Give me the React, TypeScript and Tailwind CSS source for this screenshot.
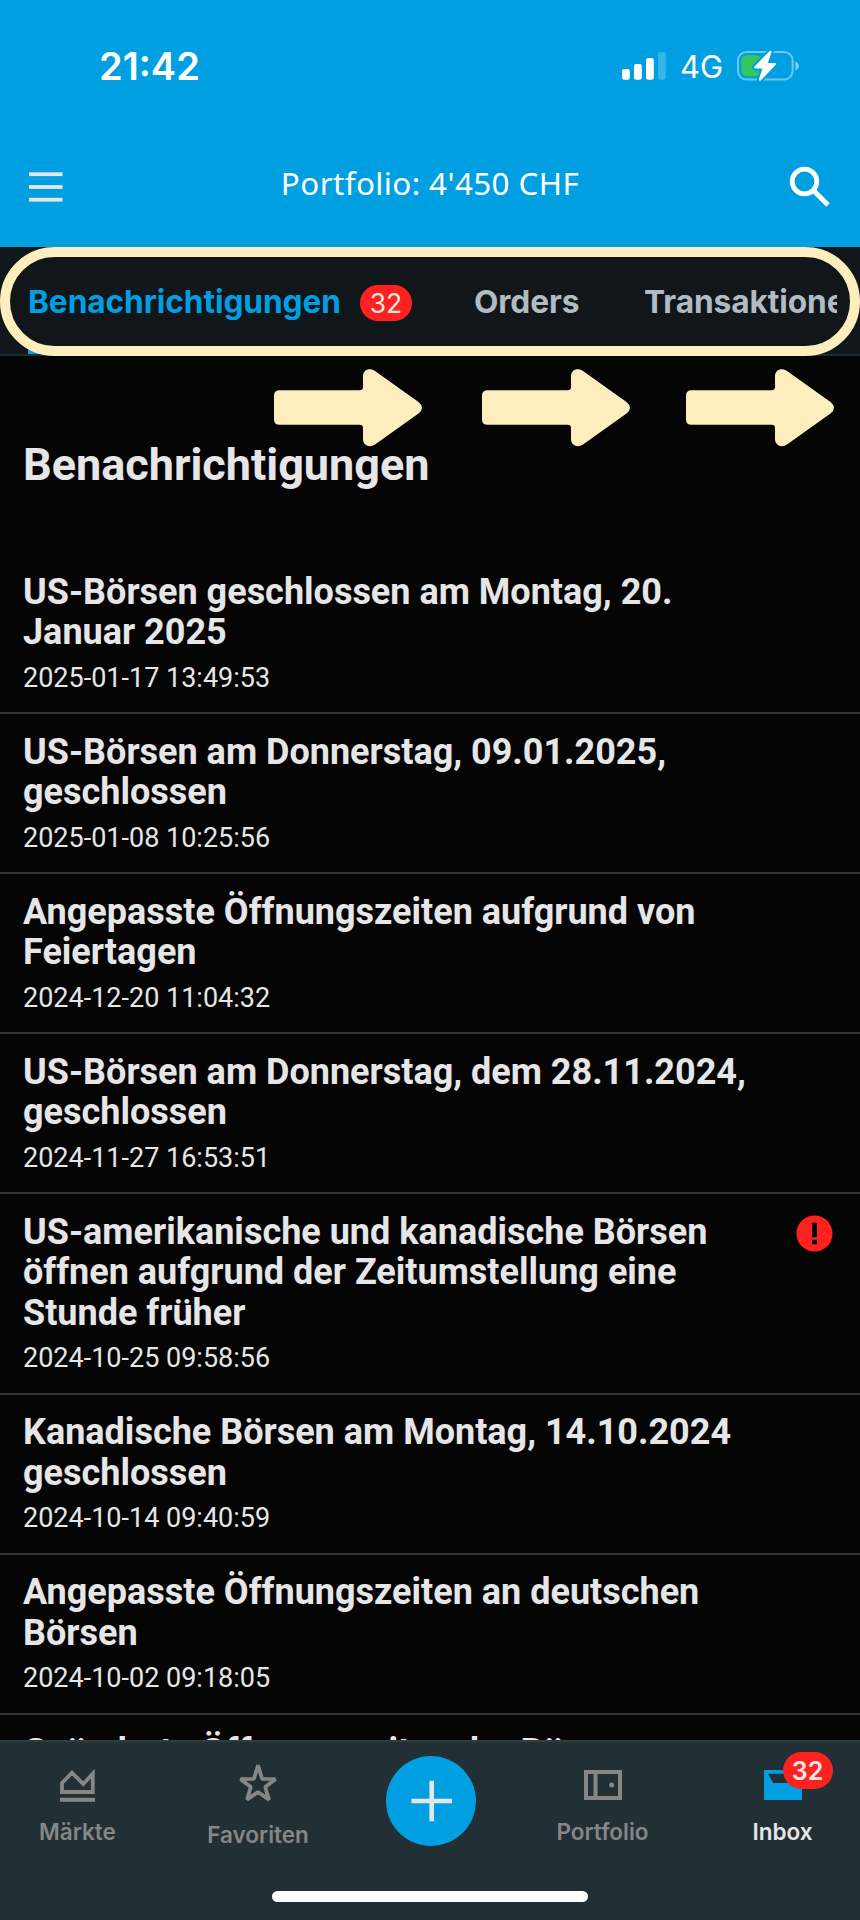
import type { ReactNode } from "react";

type Notice = { title: string[]; date?: string; important?: boolean };

const notices: Notice[] = [
  { title: ["US-Börsen geschlossen am Montag, 20.", "Januar 2025"], date: "2025-01-17 13:49:53" },
  { title: ["US-Börsen am Donnerstag, 09.01.2025,", "geschlossen"], date: "2025-01-08 10:25:56" },
  { title: ["Angepasste Öffnungszeiten aufgrund von", "Feiertagen"], date: "2024-12-20 11:04:32" },
  { title: ["US-Börsen am Donnerstag, dem 28.11.2024,", "geschlossen"], date: "2024-11-27 16:53:51" },
  {
    title: ["US-amerikanische und kanadische Börsen", "öffnen aufgrund der Zeitumstellung eine", "Stunde früher"],
    date: "2024-10-25 09:58:56",
    important: true,
  },
  { title: ["Kanadische Börsen am Montag, 14.10.2024", "geschlossen"], date: "2024-10-14 09:40:59" },
  { title: ["Angepasste Öffnungszeiten an deutschen", "Börsen"], date: "2024-10-02 09:18:05" },
  { title: ["Geänderte Öffnungszeiten der Börsen"] },
];

function StatusBar() {
  return (
    <div className="flex h-[126px] items-start justify-between pr-[60px] pl-[99px] text-white">
      <span className="pt-[43px] text-[38px] leading-[46px] font-semibold">21:42</span>
      <div className="flex items-start pt-[50px]">
        <svg width="45" height="30" viewBox="0 0 45 30" className="mr-[13px]" fill="#fff">
          <rect x="0" y="19" width="7.8" height="10.8" rx="2.2" />
          <rect x="12" y="14" width="7.8" height="15.8" rx="2.2" />
          <rect x="24" y="8" width="7.8" height="21.8" rx="2.2" />
          <rect x="36" y="2" width="7.8" height="27.8" rx="2.2" opacity=".22" />
        </svg>
        <span className="mr-[14px] w-[43px] text-[31px] leading-[34px]">4G</span>
        <svg width="63" height="32" viewBox="0 0 63 32">
          <rect x="1" y="2" width="54.6" height="27.6" rx="8.5" fill="none" stroke="#fff" strokeOpacity=".42" strokeWidth="2" />
          <path d="M58.4 11.5c4.6 1.2 4.6 7.6 0 8.8z" fill="#fff" fillOpacity=".5" />
          <rect x="4.2" y="5.2" width="21" height="21" rx="5.5" fill="#34c759" />
          <path
            d="M32.4 1.3L17.5 16.4c-.9 1-.3 2 .9 2h7l-3.4 10.7c-.5 1.7 1 2.2 2 1.1L38.5 15c.9-1 .4-2-.8-2h-6.8l3.5-10.6c.5-1.6-1-2.2-2-1.1z"
            fill="#fff"
            stroke="#009fe1"
            strokeWidth="4"
            paintOrder="stroke"
          />
        </svg>
      </div>
    </div>
  );
}

function Header() {
  return (
    <div className="flex h-[121px] items-center justify-between pr-[29px] pl-[29px]">
      <svg width="34" height="30" viewBox="0 0 34 30" fill="#e6e6e6">
        <rect x="0" y=".3" width="33.5" height="3.8" />
        <rect x="0" y="13.1" width="33.5" height="3.8" />
        <rect x="0" y="25.8" width="33.5" height="3.8" />
      </svg>
      <span className="-mt-[7px] ml-[8px] font-['Noto_Sans',sans-serif] text-[31.4px] leading-[44px] font-[370] tracking-[0.4px] text-white">
        Portfolio: 4'450 CHF
      </span>
      <svg width="42" height="42" viewBox="0 0 42 42" fill="none" stroke="#fff">
        <circle cx="15.5" cy="15.5" r="12.3" strokeWidth="4.8" />
        <path d="M24 24L39 39" strokeWidth="5" />
      </svg>
    </div>
  );
}

function Tabs() {
  return (
    <div className="relative h-[109px] bg-[#101619]">
      <div className="flex h-full items-stretch overflow-hidden border-b-2 border-[#1d2a30] pl-[28px]">
        <div className="flex w-[809px] shrink-0 items-center overflow-hidden text-[31.7px] leading-[40px] font-bold tracking-[-0.1px] text-[#b0bcc1]">
          <div className="flex h-full w-[384px] shrink-0 items-center justify-between border-b-4 border-[#009fe1] pt-[6px] text-[#009fe1]">
            <span>Benachrichtigungen</span>
            <span className="mt-[3px] flex h-[36px] w-[52px] items-center justify-center rounded-full bg-[#ff2020] text-[26.5px] font-normal text-[#e6e6e6]">
              32
            </span>
          </div>
          <span className="mt-[2px] ml-[62px] w-[106px] shrink-0">Orders</span>
          <span className="mt-[2px] ml-[64px] shrink-0">Transaktionen</span>
        </div>
      </div>
      <div className="absolute inset-0 rounded-full border-[10px] border-[#feeebd]" />
    </div>
  );
}

function Arrow() {
  return (
    <svg width="148" height="78" viewBox="0 0 148 78" fill="#feeebd">
      <path d="M5.5 21.3H85.5Q89 21.3 89 17.8V7.5C89 .8 95.5-1.6 101 2L144.5 33Q151.5 38.8 144.5 44.6L101 75.5C95.5 79.2 89 76.5 89 70V59Q89 55.7 85.5 55.7H5.5Q0 55.7 0 50.2V26.8Q0 21.3 5.5 21.3Z" />
    </svg>
  );
}

function NoticeRow({ title, date, important }: Notice) {
  return (
    <li className="flex items-start justify-between border-b-2 border-[#343434] pt-[17.4px] pr-[27px] pb-[18.5px] pl-[23px]">
      <div>
        <h2 className="text-[36px] leading-[40.6px] font-bold whitespace-nowrap">
          {title.map((line) => (
            <span key={line} className="block">
              {line}
            </span>
          ))}
        </h2>
        {date && <p className="mt-[8.9px] text-[27px] leading-[32px]">{date}</p>}
      </div>
      {important && (
        <svg width="37" height="37" viewBox="0 0 37 37" className="mt-[3.6px]">
          <circle cx="18.5" cy="18.5" r="18" fill="#ff2020" />
          <path d="M16 7.7h5v14.6h-5zM16 24.8h5v4.4h-5z" fill="#050505" />
        </svg>
      )}
    </li>
  );
}

function NavItem({ label, className, children }: { label: string; className: string; children: ReactNode }) {
  return (
    <div className={`flex flex-col items-center text-[22.5px] leading-[28px] font-semibold ${className}`}>
      <div className="h-[38px]">{children}</div>
      <span className="mt-[18px]">{label}</span>
    </div>
  );
}

function BottomNav() {
  return (
    <nav className="flex h-[180px] shrink-0 flex-col items-center border-t-2 border-[#383a3a] bg-[#223036]">
      <div className="grid h-[149px] w-full grid-cols-[155px_206px_139px_205px_155px] items-start">
        <NavItem label="Märkte" className="pt-[20px] text-[#868686]">
          <svg width="35" height="38" viewBox="0 0 35 38" className="overflow-visible">
            <path d="M2 30V21L12 10.6 23.3 22 32.8 11.6V30Z" fill="none" stroke="currentColor" strokeWidth="3.8" />
            <rect x="0" y="35.8" width="35" height="4" fill="currentColor" />
          </svg>
        </NavItem>
        <NavItem label="Favoriten" className="pt-[23px] text-[#868686]">
          <svg width="38" height="38" viewBox="0 3 38 38" className="overflow-visible">
            <path
              d="M19 3.2L23 16.8 36.4 17.2 26.2 25 30 37.6 19 30 8 37.6 11.8 25 1.6 17.2 15 16.8Z"
              fill="none"
              stroke="currentColor"
              strokeWidth="3.8"
              strokeLinejoin="bevel"
            />
          </svg>
        </NavItem>
        <div className="flex justify-center pt-[14px]">
          <svg width="90" height="90" viewBox="0 0 90 90">
            <circle cx="45" cy="45" r="45" fill="#009fe1" />
            <path d="M25.4 45H66M45.7 24.8V65.2" stroke="#e6e6e6" strokeWidth="4.6" />
          </svg>
        </div>
        <NavItem label="Portfolio" className="pt-[20px] text-[#868686]">
          <svg width="38" height="38" viewBox="0 0 38 38">
            <path d="M2 10H36V36H2ZM11.5 10V36" fill="none" stroke="currentColor" strokeWidth="4" />
            <circle cx="27.7" cy="23" r="2.5" fill="currentColor" />
          </svg>
        </NavItem>
        <NavItem label="Inbox" className="pt-[20px] text-[#e6e6e6]">
          <div className="relative">
            <svg width="38" height="38" viewBox="0 0 38 38">
              <path d="M0 8H38V38H0ZM3.8 11.8L9.3 21H28.7L34.2 11.8Z" fill="#009fe1" fillRule="evenodd" />
            </svg>
            <span className="absolute -top-[10px] left-[19px] flex h-[37px] w-[50px] items-center justify-center rounded-full bg-[#ff2020] text-[25px] font-semibold text-[#e6e6e6]">
              32
            </span>
          </div>
        </NavItem>
      </div>
      <div className="h-[11px] w-[316px] rounded-full bg-white" />
    </nav>
  );
}

export default function App() {
  return (
    <div className="flex h-[1920px] w-[860px] flex-col overflow-hidden bg-[#050505] font-['Inter',sans-serif]">
      <header className="shrink-0 bg-[#009fe1]">
        <StatusBar />
        <Header />
        <Tabs />
      </header>
      <main className="relative min-h-0 flex-1 overflow-hidden font-['Roboto',sans-serif] text-[#e6e6e6]">
        <h1 className="pt-[82px] pb-[63.5px] pl-[23px] text-[45px] leading-[53px] font-bold">Benachrichtigungen</h1>
        <ul>
          {notices.map((n) => (
            <NoticeRow key={n.title[0]} {...n} />
          ))}
        </ul>
        <div className="absolute top-[13px] left-[274px] flex">
          <Arrow />
          <div className="ml-[60px]">
            <Arrow />
          </div>
          <div className="ml-[56px]">
            <Arrow />
          </div>
        </div>
      </main>
      <BottomNav />
    </div>
  );
}
